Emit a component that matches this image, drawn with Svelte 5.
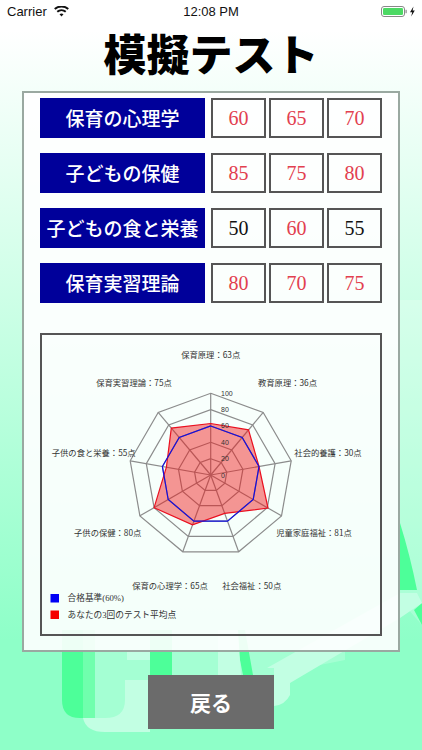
<script>
  const subjects = [
    { name: "保育の心理学", scores: [60, 65, 70] },
    { name: "子どもの保健", scores: [85, 75, 80] },
    { name: "子どもの食と栄養", scores: [50, 60, 55] },
    { name: "保育実習理論", scores: [80, 70, 75] }
  ];

  const cx = 210.7;
  const cy = 475;
  const radius = 81.7;
  const axes = 9;

  // plotted values differ from the printed label for 教育原理 and 社会的養護 (out of 50)
  const average = [63, 72, 60, 81, 50, 65, 80, 55, 75];

  const labels = [
    { text: "保育原理：63点", x: 210.7, y: 354 },
    { text: "教育原理：36点", x: 287.5, y: 382 },
    { text: "社会的養護：30点", x: 328, y: 452 },
    { text: "児童家庭福祉：81点", x: 314, y: 532 },
    { text: "社会福祉：50点", x: 251.7, y: 585 },
    { text: "保育の心理学：65点", x: 170, y: 585 },
    { text: "子供の保健：80点", x: 107.7, y: 532 },
    { text: "子供の食と栄養：55点", x: 93.7, y: 452 },
    { text: "保育実習理論：75点", x: 134, y: 382 }
  ];

  function point(i, value) {
    const a = (i * 2 * Math.PI) / axes;
    const r = (radius * value) / 100;
    return [cx + r * Math.sin(a), cy - r * Math.cos(a)];
  }

  function ring(values) {
    return values.map((v, i) => point(i, v).map((n) => n.toFixed(1)).join(",")).join(" ");
  }

  const grid = [20, 40, 60, 80, 100].map((v) => ring(Array(axes).fill(v)));
  const spokes = Array.from({ length: axes }, (_, i) => point(i, 100));
  const ticks = [0, 20, 40, 60, 80, 100];
</script>

<div class="page">
  <svg class="watermark" viewBox="0 0 422 750" aria-hidden="true">
    <path class="soft" d="M400 300H422V625L400 600Z" />
    <path class="dark" d="M62 630V700Q62 718 80 718H95V630Z" />
    <path class="soft" d="M83 630H150V718H83ZM172 630H218V675H172ZM240 630H345V660L270 675H240Z" />
    <path class="dark" d="M150 630H172V675H150ZM234 630H245L253 675H243Z" />
    <path class="dark" d="M400 523Q410 555 417 590H400ZM414 610L422 603V625Z" />
    <path class="pale" d="M127 652H150V660H127ZM218 630H238L241 675H218Z" />
    <path class="pale" d="M83 718Q86 732 105 732H150V680H125V700Q125 718 105 718Z" />
    <path class="pale" d="M267 668L400 593H417L422 603L400 618L290 683V695Q285 705 274 706V668Z" />
  </svg>

  <div class="status">
    <div class="carrier">
      Carrier
      <svg width="15" height="11" viewBox="0 0 15 11">
        <path d="M7.5 10.6L5.5 8.3a3 3 0 0 1 4 0ZM3.9 6.6a5.5 5.5 0 0 1 7.2 0l1.3-1.5a7.6 7.6 0 0 0-9.8 0ZM1.4 3.8a9.2 9.2 0 0 1 12.2 0L14.9 2.3a11 11 0 0 0-14.8 0Z" fill="#111" />
      </svg>
    </div>
    <div class="time">12:08 PM</div>
    <div class="power">
      <svg width="36" height="11" viewBox="0 0 36 11">
        <rect x="0.5" y="0.5" width="23" height="10" rx="2.5" fill="none" stroke="#888" />
        <rect x="2" y="2" width="20" height="7" rx="1.2" fill="#4cd964" />
        <rect x="24.5" y="3.8" width="1.2" height="3.4" fill="#888" />
        <path d="M32.5 0.5L29 6.2H31.2L30.2 10.5L33.8 4.6H31.6Z" fill="#111" />
      </svg>
    </div>
  </div>

  <h1>模擬テスト</h1>

  <section class="panel">
    {#each subjects as subject}
      <div class="row">
        <div class="subject">{subject.name}</div>
        {#each subject.scores as score}
          <div class="score" class:fail={score >= 60}>{score}</div>
        {/each}
      </div>
    {/each}

    <div class="chart">
      <svg width="338" height="299" viewBox="42 335 338 299">
        {#each grid as pts}
          <polygon points={pts} class="web" />
        {/each}
        {#each spokes as s}
          <line x1={cx} y1={cy} x2={s[0]} y2={s[1]} class="spoke" />
        {/each}
        <polygon points={ring(average)} class="mine" />
        <polygon points={ring(Array(axes).fill(60))} class="pass" />
        {#each ticks as t}
          <text x="221" y={cy - (radius * t) / 100} class="tick">{t}</text>
        {/each}
        {#each labels as l}
          <text x={l.x} y={l.y} class="label">{l.text}</text>
        {/each}
        <rect x="50.5" y="594" width="8.5" height="8.5" fill="#0000f5" />
        <text x="67.5" y="598.3" class="legend">合格基準(60%)</text>
        <rect x="50.5" y="610.5" width="8.5" height="8.5" fill="#f50000" />
        <text x="67.5" y="614.8" class="legend">あなたの3回のテスト平均点</text>
      </svg>
    </div>
  </section>

  <button class="back">戻る</button>
</div>

<style>
  :global(body) {
    margin: 0;
  }
  .page {
    position: relative;
    width: 422px;
    height: 750px;
    overflow: hidden;
    display: flex;
    flex-direction: column;
    align-items: center;
    background: linear-gradient(#fff 30px, #8effc8 640px);
    font-family: "Noto Sans CJK JP", sans-serif;
  }
  .watermark {
    position: absolute;
    left: 0;
    top: 0;
    width: 422px;
    height: 750px;
  }
  .dark {
    fill: #4dff99;
  }
  .soft {
    fill: rgba(255, 255, 255, 0.2);
  }
  .pale {
    fill: #c2ffe3;
  }
  .status {
    position: relative;
    width: 100%;
    height: 22px;
    display: grid;
    grid-template-columns: 1fr auto 1fr;
    align-items: center;
    font: 13px "Liberation Sans", sans-serif;
    color: #111;
  }
  .carrier {
    padding-left: 7px;
    display: flex;
    align-items: center;
    gap: 7px;
  }
  .power {
    display: flex;
    justify-content: flex-end;
    padding-right: 5px;
  }
  .power svg {
    display: block;
  }
  h1 {
    position: relative;
    margin: 0;
    height: 69px;
    font-size: 43px;
    line-height: 60px;
    font-weight: 900;
    color: #000;
  }
  .panel {
    position: relative;
    box-sizing: border-box;
    width: 378px;
    height: 561px;
    padding: 5px 16px 15px;
    border: 2px solid #9aa9a1;
    background: rgba(255, 255, 255, 0.9);
    display: flex;
    flex-direction: column;
    gap: 15px;
  }
  .row {
    display: flex;
    height: 40px;
    gap: 3px;
  }
  .subject {
    width: 165px;
    margin-right: 3px;
    background: #00009a;
    color: #fff;
    font-size: 19px;
    font-weight: 500;
    line-height: 40px;
    text-align: center;
    white-space: nowrap;
  }
  .score {
    box-sizing: border-box;
    width: 55px;
    border: 2px solid #555;
    font: 20px/36px "Liberation Serif", serif;
    text-align: center;
    color: #111;
  }
  .fail {
    color: #e2404f;
  }
  .chart {
    box-sizing: border-box;
    width: 342px;
    height: 303px;
    margin-top: 15px;
    border: 2px solid #555;
  }
  .chart svg {
    display: block;
  }
  .web {
    fill: none;
    stroke: #8c8c8c;
    stroke-width: 1.2;
  }
  .spoke {
    stroke: #8c8c8c;
    stroke-width: 1.2;
  }
  .mine {
    fill: rgba(240, 20, 20, 0.45);
    stroke: #ea1020;
    stroke-width: 1.2;
  }
  .pass {
    fill: none;
    stroke: #1010e0;
    stroke-width: 1.2;
  }
  text {
    dominant-baseline: central;
    fill: #333;
  }
  .tick {
    font: 7px "Liberation Sans", sans-serif;
  }
  .label {
    font-size: 8.3px;
    text-anchor: middle;
  }
  .legend {
    font-family: "Liberation Serif", "Noto Sans CJK JP", serif;
    font-size: 8.7px;
  }
  .back {
    position: relative;
    width: 126px;
    height: 54px;
    margin-top: 23px;
    padding: 0;
    border: none;
    background: #6b6b6b;
    color: #fff;
    font-family: inherit;
    font-size: 21px;
    font-weight: 700;
  }
</style>
